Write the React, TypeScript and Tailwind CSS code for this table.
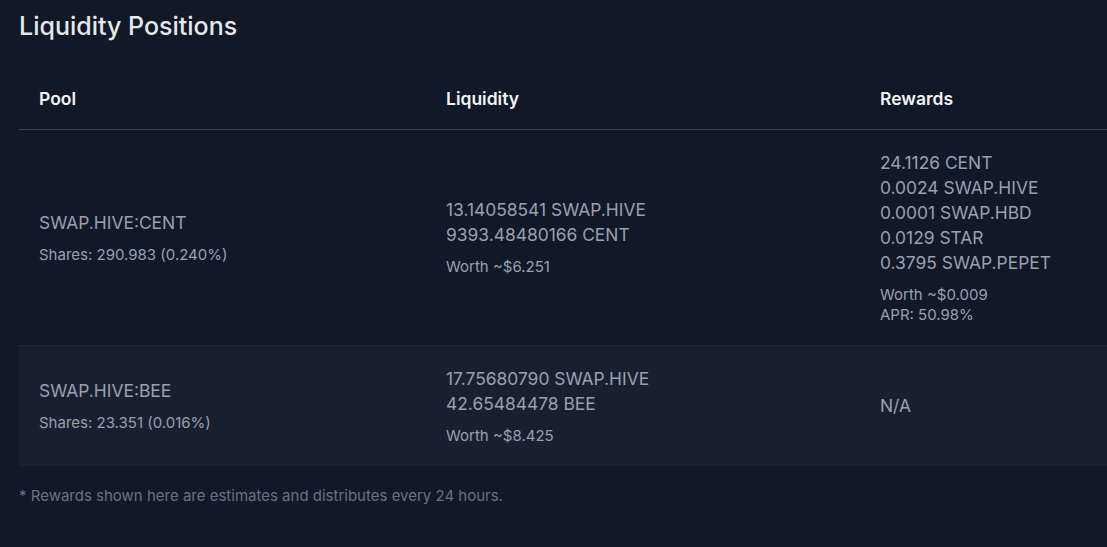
type Position = {
  pool: string;
  shares: string;
  liquidity: string[];
  worth: string;
  rewards?: string[];
  rewardsWorth?: string;
  apr?: string;
};

const positions: Position[] = [
  {
    pool: "SWAP.HIVE:CENT",
    shares: "Shares: 290.983 (0.240%)",
    liquidity: ["13.14058541 SWAP.HIVE", "9393.48480166 CENT"],
    worth: "Worth ~$6.251",
    rewards: [
      "24.1126 CENT",
      "0.0024 SWAP.HIVE",
      "0.0001 SWAP.HBD",
      "0.0129 STAR",
      "0.3795 SWAP.PEPET",
    ],
    rewardsWorth: "Worth ~$0.009",
    apr: "APR: 50.98%",
  },
  {
    pool: "SWAP.HIVE:BEE",
    shares: "Shares: 23.351 (0.016%)",
    liquidity: ["17.75680790 SWAP.HIVE", "42.65484478 BEE"],
    worth: "Worth ~$8.425",
  },
];

const line = "text-[17.4px] leading-[25px] text-gray-400";
const small = "text-[15px] leading-5 text-gray-400";
const head = "h-[60px] px-5 text-[17.5px] font-semibold text-gray-100";

export default function App() {
  return (
    <div
      className="h-[547px] w-full overflow-hidden bg-[#111827]"
      style={{ fontFamily: "Inter, 'Noto Sans', sans-serif" }}
    >
      <div className="pl-[19px]">
        <h2 className="pt-[10px] text-[25px] leading-8 font-medium text-gray-200">
          Liquidity Positions
        </h2>

        <div className="mt-[27px] overflow-hidden">
          <table className="w-[1141px] table-fixed border-collapse text-left">
            <colgroup>
              <col className="w-[407px]" />
              <col className="w-[434px]" />
              <col className="w-[300px]" />
            </colgroup>
            <thead>
              <tr className="border-b border-gray-700">
                <th className={head}>Pool</th>
                <th className={head}>Liquidity</th>
                <th className={head}>Rewards</th>
              </tr>
            </thead>
            <tbody>
              {positions.map((p, i) => (
                <tr
                  key={p.pool}
                  className={i % 2 === 1 ? "bg-[#182030]" : "border-b border-gray-800"}
                >
                  <td className="px-5 py-5 align-middle">
                    <div className={line}>{p.pool}</div>
                    <div className={`mt-[10px] ${small}`}>{p.shares}</div>
                  </td>
                  <td className="px-5 py-5 align-middle">
                    {p.liquidity.map((l) => (
                      <div key={l} className={line}>
                        {l}
                      </div>
                    ))}
                    <div className={`mt-[10px] ${small}`}>{p.worth}</div>
                  </td>
                  <td className="px-5 py-5 align-middle">
                    {p.rewards ? (
                      <>
                        {p.rewards.map((r) => (
                          <div key={r} className={line}>
                            {r}
                          </div>
                        ))}
                        <div className={`mt-[10px] ${small}`}>{p.rewardsWorth}</div>
                        <div className={small}>{p.apr}</div>
                      </>
                    ) : (
                      <div className={line}>N/A</div>
                    )}
                  </td>
                </tr>
              ))}
            </tbody>
          </table>
        </div>

        <p className="mt-[20px] text-[15px] leading-5 text-gray-500">
          * Rewards shown here are estimates and distributes every 24 hours.
        </p>
      </div>
    </div>
  );
}
